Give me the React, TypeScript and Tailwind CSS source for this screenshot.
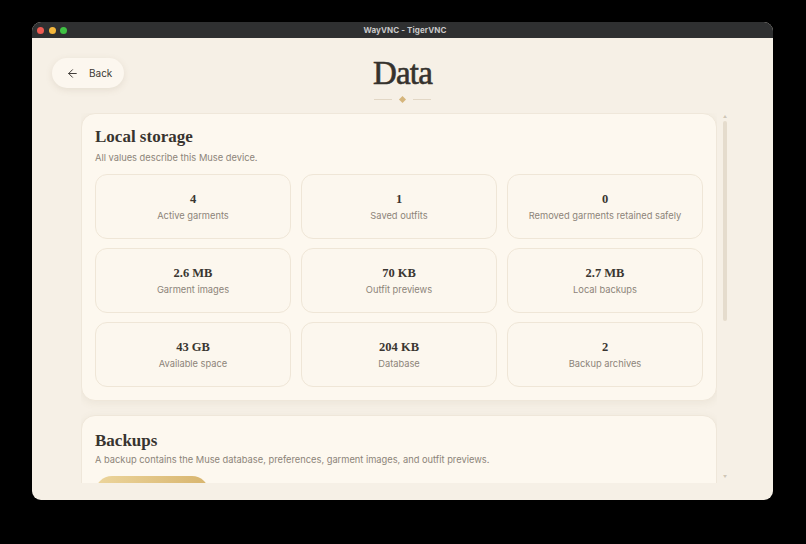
import React from "react";
import { ArrowLeft } from "lucide-react";

const serif = { fontFamily: '"Liberation Serif", "Times New Roman", serif' };

const tiles = [
  { v: "4", l: "Active garments" },
  { v: "1", l: "Saved outfits" },
  { v: "0", l: "Removed garments retained safely" },
  { v: "2.6 MB", l: "Garment images" },
  { v: "70 KB", l: "Outfit previews" },
  { v: "2.7 MB", l: "Local backups" },
  { v: "43 GB", l: "Available space" },
  { v: "204 KB", l: "Database" },
  { v: "2", l: "Backup archives" },
];

export default function App() {
  return (
    <div
      className="w-[806px] h-[544px] bg-black pt-[22px] pl-[32px]"
      style={{ fontFamily: 'Inter, "Liberation Sans", sans-serif' }}
    >
      <div className="w-[741px] h-[478px] rounded-[9px] overflow-hidden flex flex-col bg-[#f6f0e6]">
        {/* title bar */}
        <div className="h-[16px] bg-[#2f3031] flex items-center relative shrink-0">
          <div className="flex items-center gap-[4.5px] pl-[5px]">
            <span className="w-[7px] h-[7px] rounded-full bg-[#ee5b52]" />
            <span className="w-[7px] h-[7px] rounded-full bg-[#f4b73c]" />
            <span className="w-[7px] h-[7px] rounded-full bg-[#3fc143]" />
          </div>
          <div className="flex-1 text-center text-[8px] font-bold text-[#c9c9c9] pr-[30px] tracking-[0.1px]">
            WayVNC - TigerVNC
          </div>
        </div>

        {/* content */}
        <div className="flex-1 flex flex-col">
          {/* header */}
          <div className="grid grid-cols-[1fr_auto_1fr] px-[20px] pt-[20px] h-[75px] shrink-0">
            <div className="flex items-start">
              <button className="h-[30px] w-[72px] rounded-full bg-[#fcf7ef] shadow-[0_2px_7px_rgba(120,100,70,0.13)] flex items-center pl-[14px] gap-[10px] text-[10px] text-[#3c3833]">
                <ArrowLeft size={13} strokeWidth={1.8} className="text-[#3c3833]" />
                <span>Back</span>
              </button>
            </div>
            <div className="flex flex-col items-center">
              <div
                className="text-[33px] leading-[33px] text-[#35322d] mt-[-1px] tracking-[-0.8px] [-webkit-text-stroke:0.6px_#35322d]"
                style={serif}
              >
                Data
              </div>
              <div className="flex items-center gap-[8px] mt-[7px]">
                <span className="w-[18px] h-px bg-[#e2d7c5]" />
                <span className="w-[5px] h-[5px] rotate-45 bg-[#d5b57c]" />
                <span className="w-[18px] h-px bg-[#e2d7c5]" />
              </div>
            </div>
            <div />
          </div>

          {/* scroll area */}
          <div className="h-[370px] flex pl-[49px]">
            <div className="w-[636px] overflow-hidden flex flex-col gap-[14px]">
              <div className="rounded-[14px] bg-[#fdf8ef] border border-[#efe7da] shadow-[0_2px_8px_rgba(120,100,70,0.08)] px-[13px] pt-[13px] pb-[13px] shrink-0">
                <div className="text-[17px] leading-[20px] font-bold text-[#38342f]" style={serif}>
                  Local storage
                </div>
                <div className="text-[9.3px] leading-[14px] text-[#8c8479] mt-[4px]">
                  All values describe this Muse device.
                </div>
                <div className="grid grid-cols-3 gap-x-[10px] gap-y-[9px] mt-[9px]">
                  {tiles.map((t) => (
                    <div
                      key={t.l}
                      className="h-[65px] rounded-[12px] border border-[#efe6d7] bg-[#fcf7ee] flex flex-col items-center justify-center gap-[2px]"
                    >
                      <div className="text-[12.5px] leading-[16px] font-bold text-[#3a3631]" style={serif}>
                        {t.v}
                      </div>
                      <div className="text-[9.3px] leading-[14px] text-[#8c8479]">{t.l}</div>
                    </div>
                  ))}
                </div>
              </div>

              <div className="rounded-[14px] bg-[#fdf8ef] border border-[#efe7da] shadow-[0_2px_8px_rgba(120,100,70,0.08)] px-[13px] pt-[15px] pb-[14px] shrink-0">
                <div className="text-[17px] leading-[20px] font-bold text-[#38342f]" style={serif}>
                  Backups
                </div>
                <div className="text-[9.3px] leading-[14px] text-[#8c8479] mt-[2px]">
                  A backup contains the Muse database, preferences, garment images, and outfit previews.
                </div>
                <div className="mt-[9px] w-[114px] h-[34px] rounded-full bg-gradient-to-r from-[#ecd59c] to-[#d8b56e]" />
              </div>
            </div>
            <div className="w-[10px] ml-[3px] flex flex-col items-center pt-[2px] pb-[4px]">
              <span className="text-[4px] leading-[4px] text-[#cfc6b6]">▲</span>
              <div className="flex-1 w-[4px] mt-[2px]">
                <div className="h-[200px] w-[4px] rounded-full bg-[#e5dccd]" />
              </div>
              <span className="text-[4px] leading-[4px] text-[#cfc6b6]">▼</span>
            </div>
          </div>
        </div>
      </div>
    </div>
  );
}
